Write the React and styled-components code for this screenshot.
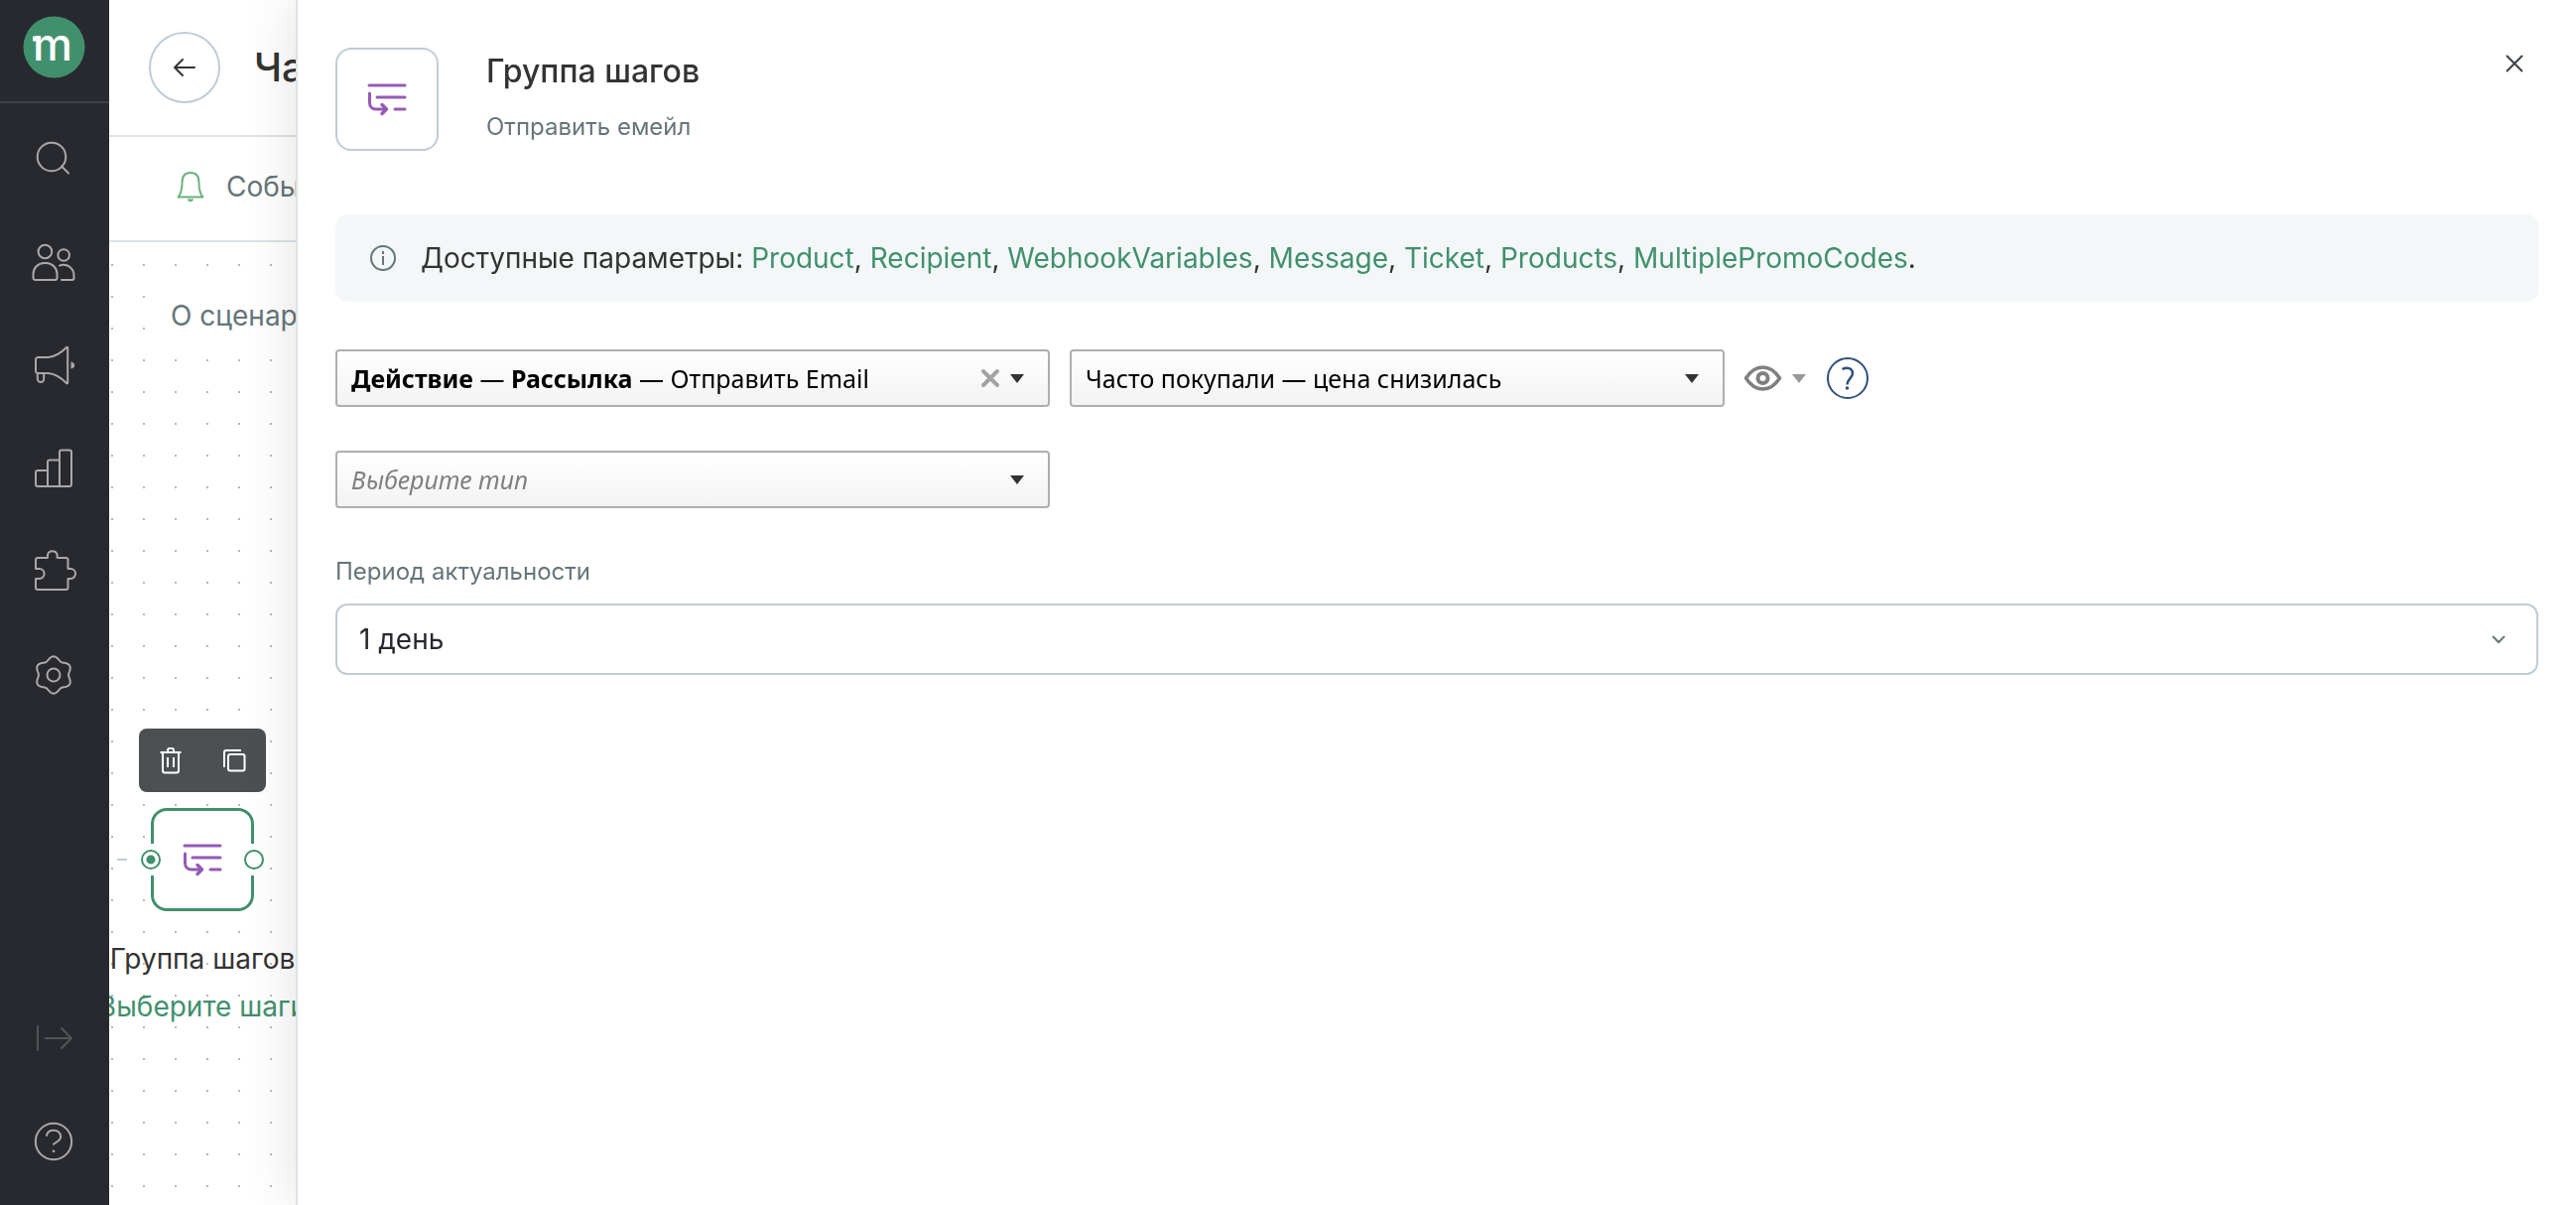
import React, { useState } from "react";
import styled, { createGlobalStyle } from "styled-components";

const color = {
  DARK: "#28292e",
  GREEN: "#41906d",
  PURPLE: "#955ab5",
  TEXT: "#333333",
  GREY_TEXT: "#66757a",
  LINE: "#dce3e6",
  BORDER: "#c0ccd4",
  ICON: "#a9a9ab",
};

const GlobalStyle = createGlobalStyle`
  *, *::before {
    box-sizing: border-box;
  }
  body {
    margin: 0;
    background: #fff;
    color: ${color.TEXT};
    font-family: Inter, "Liberation Sans", sans-serif;
    font-size: 28px;
    line-height: 40px;
  }
  button, select {
    font: inherit;
    color: inherit;
  }
  svg {
    display: block;
    flex: none;
  }
`;

const Page = styled.div`
  display: flex;
  min-height: 100vh;
`;

const Sidebar = styled.aside`
  display: flex;
  flex-direction: column;
  flex: none;
  width: 110px;
  padding-bottom: 12px;
  background: ${color.DARK};
`;

const LogoLink = styled.a`
  display: block;
  height: 104px;
  padding: 16px 23px;
  border-bottom: 2px solid #3f4045;
`;

const Nav = styled.nav`
  display: flex;
  flex-direction: column;
  padding-top: 4px;

  &:last-child {
    margin-top: auto;
  }
`;

const NavButton = styled.button`
  display: flex;
  align-items: center;
  height: 104px;
  padding: 0 31px;
  border: 0;
  background: none;
  color: ${(props) => (props.$muted ? "#535458" : color.ICON)};
  cursor: pointer;
`;

const Main = styled.main`
  display: flex;
  flex: 1;
  flex-direction: column;
  min-width: 0;
  overflow: hidden;
`;

const MainHeader = styled.header`
  display: flex;
  align-items: center;
  gap: 34px;
  height: 138px;
  padding: 0 40px;
  border-bottom: 2px solid ${color.LINE};
`;

const BackButton = styled.button`
  display: flex;
  align-items: center;
  justify-content: center;
  flex: none;
  width: 72px;
  height: 72px;
  padding: 0;
  border: 2px solid ${color.BORDER};
  border-radius: 50%;
  background: #fff;
  cursor: pointer;
`;

const PageTitle = styled.h1`
  margin: 0;
  font-size: 40px;
  font-weight: 500;
  line-height: 48px;
`;

const EventBar = styled.div`
  display: flex;
  align-items: center;
  gap: 20px;
  padding: 30px 66px 34px;
  border-bottom: 2px solid ${color.LINE};
  color: ${color.GREY_TEXT};
`;

const Canvas = styled.section`
  position: relative;
  flex: 1;
  padding: 46px 40px;
  background-image: radial-gradient(circle, #b8b8b8 1px, transparent 1px);
  background-position: -13px 7px;
  background-size: 32px 32px;
`;

const AboutLink = styled.a`
  display: inline-block;
  padding: 8px 22px;
  background: #fff;
  color: ${color.GREY_TEXT};
  text-decoration: none;
`;

const Edge = styled.div`
  position: absolute;
  top: 621px;
  left: 8px;
  width: 10px;
  height: 2px;
  background: ${color.BORDER};
`;

const StepNode = styled.div`
  position: absolute;
  top: 490px;
  left: -66px;
  display: flex;
  flex-direction: column;
  align-items: center;
  width: 320px;
  white-space: nowrap;
`;

const NodeToolbar = styled.div`
  display: flex;
  margin-bottom: 16px;
  border-radius: 8px;
  background: rgba(65, 69, 71, 0.94);
`;

const ToolButton = styled.button`
  display: flex;
  align-items: center;
  justify-content: center;
  width: 64px;
  height: 64px;
  padding: 0;
  border: 0;
  background: none;
  color: #fff;
  cursor: pointer;
`;

const StepBox = styled.div`
  position: relative;
  display: flex;
  align-items: center;
  justify-content: center;
  flex: none;
  width: 104px;
  height: 104px;
  border: ${(props) => (props.$selected ? `3px solid ${color.GREEN}` : `2px solid ${color.BORDER}`)};
  border-radius: 16px;
  background: #fff;
`;

const Port = styled.span`
  position: absolute;
  top: 33px;
  ${(props) => props.$side}: -13px;
  display: flex;
  align-items: center;
  width: 20px;
  height: 32px;
  background: #fff;

  &::before {
    content: "";
    flex: none;
    width: 20px;
    height: 20px;
    border: 2px solid ${color.GREEN};
    border-radius: 50%;
    background: ${(props) => (props.$filled ? `radial-gradient(circle, ${color.GREEN} 4px, #fff 5px)` : "#fff")};
  }
`;

const NodeTitle = styled.div`
  margin-top: 24px;
  line-height: 48px;
`;

const NodeLink = styled.a`
  color: ${color.GREEN};
  line-height: 48px;
  text-decoration: none;
`;

const Drawer = styled.section`
  position: fixed;
  top: 0;
  right: 0;
  bottom: 0;
  left: 298px;
  padding: 48px 38px;
  border-left: 2px solid ${color.LINE};
  background: #fff;
  box-shadow: 0 0 52px rgba(0, 0, 0, 0.12);
  overflow: auto;
`;

const DrawerHeader = styled.header`
  display: flex;
  align-items: flex-start;
  gap: 48px;
  margin-bottom: 64px;
`;

const DrawerHeading = styled.div`
  flex: 1;
  padding-top: 4px;
`;

const DrawerTitle = styled.h2`
  margin: 0 0 20px;
  font-size: 32px;
  font-weight: 500;
  line-height: 40px;
`;

const DrawerSubtitle = styled.p`
  margin: 0;
  color: ${color.GREY_TEXT};
  font-size: 24px;
  line-height: 32px;
`;

const CloseButton = styled.button`
  display: flex;
  align-items: center;
  justify-content: center;
  width: 48px;
  height: 32px;
  padding: 0;
  border: 0;
  background: none;
  cursor: pointer;
`;

const InfoBar = styled.div`
  display: flex;
  align-items: center;
  gap: 24px;
  margin-bottom: 48px;
  padding: 24px 34px;
  border-radius: 12px;
  background: #f3f7f8;
`;

const ParamLink = styled.a`
  color: ${color.GREEN};
  text-decoration: none;
`;

const FieldRow = styled.div`
  display: flex;
  align-items: center;
  gap: 20px;
  margin-bottom: 44px;
`;

const ClassicField = styled.div`
  position: relative;
  display: grid;
  grid-template-columns: 1fr auto;
  align-items: center;
  width: ${(props) => (props.$compact ? "660px" : "720px")};
  height: 58px;
  border: 2px solid #aeaeb3;
  border-radius: 4px;
  background: linear-gradient(#ffffff, #f3f3f3);
  color: #000;
  font-family: "Noto Sans", "Open Sans", sans-serif;
  font-size: 25px;
`;

const ClassicSelect = styled.select`
  grid-row: 1;
  grid-column: 1 / -1;
  width: 100%;
  height: 54px;
  padding: 0 14px;
  border: 0;
  background: none;
  color: ${(props) => (props.$placeholder ? "#808080" : "#000")};
  font-style: ${(props) => (props.$placeholder ? "italic" : "normal")};
  opacity: ${(props) => (props.$covered ? 0 : 1)};
  appearance: none;
`;

const ClassicValue = styled.span`
  grid-row: 1;
  grid-column: 1;
  padding-left: 14px;
  white-space: nowrap;
`;

const ClassicActions = styled.span`
  display: flex;
  grid-row: 1;
  grid-column: 2;
  align-items: center;
  gap: 10px;
  padding-right: 24px;
  pointer-events: none;
`;

const IconButton = styled.button`
  position: relative;
  display: flex;
  align-items: center;
  gap: 10px;
  padding: 0;
  border: 0;
  background: none;
  cursor: pointer;
  pointer-events: auto;
`;

const PeriodLabel = styled.label`
  display: block;
  margin: 48px 0 16px;
  color: ${color.GREY_TEXT};
  font-size: 24px;
  line-height: 32px;
`;

const PeriodField = styled.div`
  display: grid;
  align-items: center;

  svg {
    grid-area: 1 / 1;
    justify-self: end;
    margin-right: 32px;
    pointer-events: none;
  }
`;

const PeriodSelect = styled.select`
  grid-area: 1 / 1;
  width: 100%;
  height: 72px;
  padding: 0 22px;
  border: 2px solid ${color.BORDER};
  border-radius: 12px;
  background: #fff;
  color: ${color.DARK};
  appearance: none;
`;

// six lobes around the centre of a 48px box
const gearPath = () => {
  const points = [];
  for (let i = 0; i < 120; i++) {
    const a = (i / 120) * Math.PI * 2;
    const r = 16.9 + 1.8 * Math.cos(6 * a);
    points.push(`${(23 + r * Math.sin(a)).toFixed(2)} ${(24 - r * Math.cos(a)).toFixed(2)}`);
  }
  return `M${points.join("L")}Z`;
};

const NAV_ICONS = {
  search: (
    <>
      <circle cx="21" cy="22" r="14.3" />
      <path d="M31 31.5l7 7" />
    </>
  ),
  people: (
    <>
      <circle cx="14.4" cy="13.5" r="6.8" />
      <path d="M4.7 42h19.8a2 2 0 0 0 2-2v-4a11 11 0 0 0-11-11h-2a11 11 0 0 0-11 11v4a2 2 0 0 0 2.2 2z" />
      <circle cx="33.2" cy="17" r="5.8" />
      <path d="M29 27.6c1.2-.6 2.5-.8 4-.8a10.5 10.5 0 0 1 10.5 10.5v3a1.7 1.7 0 0 1-1.7 1.7H31" />
    </>
  ),
  megaphone: (
    <>
      <path d="M7.2 16h10.3C24.5 15.5 31 11 36 6c.6-.6 1.2-.3 1.2.5v35c0 .8-.6 1.1-1.2.5-5-5-11.5-9.5-18.5-10H7.2A2.2 2.2 0 0 1 5 29.800V18.2A2.2 2.2 0 0 1 7.2 16z" />
      <path d="M6.8 32v5.8a3.2 3.2 0 0 0 6.4 0V32" />
      <path d="M40.5 20.5v7c5-1 5-6 0-7z" fill="currentColor" stroke="none" />
    </>
  ),
  chart: (
    <>
      <path d="M17 42V17.5a2 2 0 0 1 2-2h10" />
      <path d="M17 26H7a2 2 0 0 0-2 2v12a2 2 0 0 0 2 2h32a2 2 0 0 0 2-2V7.5a2 2 0 0 0-2-2h-8a2 2 0 0 0-2 2V42" />
    </>
  ),
  puzzle: (
    <path d="M7 10h9.5c.5 0 .7-.3.5-.8V6.8a5 5 0 0 1 9.6 0v2.4c-.2.5 0 .8.5.8h8.4a2 2 0 0 1 2 2v9h2.6a5 5 0 0 1 0 10h-2.6v9a2 2 0 0 1-2 2H7a2 2 0 0 1-2-2v-9h3.6a5 5 0 0 0 0-10H5v-9a2 2 0 0 1 2-2z" />
  ),
  gear: (
    <>
      <circle cx="23" cy="24" r="6.5" />
      <path d={gearPath()} />
    </>
  ),
  expand: <path d="M7 12v24M15 24h26M31 14l10 10-10 10" />,
  help: (
    <>
      <circle cx="23" cy="24" r="18.2" />
      <path d="M16 18c.7-3.2 3.5-5.2 7-5.2 4 0 7.2 2.5 7.2 6.2 0 4.2-4.4 5.2-7.2 7.8" />
      <circle cx="23" cy="33.8" r="1.4" fill="currentColor" stroke="none" />
    </>
  ),
};

function NavItem({ type, label, muted }) {
  return (
    <NavButton type="button" aria-label={label} $muted={muted}>
      <svg width="48" height="48" viewBox="0 0 48 48" fill="none" stroke="currentColor" strokeWidth="2" strokeLinecap="round" strokeLinejoin="round">
        {NAV_ICONS[type]}
      </svg>
    </NavButton>
  );
}

function StepsIcon() {
  return (
    <svg width="40" height="34" viewBox="0 0 40 34" fill="none" stroke={color.PURPLE} strokeWidth="3" strokeLinecap="round" strokeLinejoin="round">
      <path d="M2 3h36M10 15h28M28 27h10M2.5 11v9.5c0 4 2.5 6.5 6.5 6.5h10" />
      <path d="M15 22.5l4.5 4.5-4.5 4.5" strokeWidth="3.5" />
    </svg>
  );
}

function Caret({ fill = "#333" }) {
  return (
    <svg width="14" height="9" viewBox="0 0 14 9">
      <path d="M0 0h14L7 9z" fill={fill} />
    </svg>
  );
}

const PARAMS = ["Product", "Recipient", "WebhookVariables", "Message", "Ticket", "Products", "MultiplePromoCodes"];

export default function App() {
  const [period, setPeriod] = useState("1 день");

  return (
    <Page>
      <GlobalStyle />
      <Sidebar>
        <LogoLink href="#" aria-label="m">
          <svg width="63" height="63" viewBox="0 0 63 63">
            <circle cx="31.5" cy="31.5" r="31" fill={color.GREEN} />
            <rect x="10" y="20.5" width="6" height="5" fill="#fff" />
            <text x="10" y="44.5" fill="#fff" fontFamily="Inter, sans-serif" fontSize="45" fontWeight="500">
              m
            </text>
          </svg>
        </LogoLink>
        <Nav>
          <NavItem type="search" label="Поиск" />
          <NavItem type="people" label="Клиенты" />
          <NavItem type="megaphone" label="Кампании" />
          <NavItem type="chart" label="Отчёты" />
          <NavItem type="puzzle" label="Интеграции" />
          <NavItem type="gear" label="Настройки" />
        </Nav>
        <Nav>
          <NavItem type="expand" label="Развернуть" muted />
          <NavItem type="help" label="Помощь" />
        </Nav>
      </Sidebar>

      <Main>
        <MainHeader>
          <BackButton type="button" aria-label="Назад">
            <svg width="24" height="20" viewBox="0 0 24 20" fill="none" stroke={color.TEXT} strokeWidth="2" strokeLinecap="round" strokeLinejoin="round">
              <path d="M22 10H2M10 2L2 10l8 8" />
            </svg>
          </BackButton>
          <PageTitle>Часто</PageTitle>
        </MainHeader>
        <EventBar>
          <svg width="32" height="32" viewBox="0 0 32 32" fill="none" stroke="#6ab27e" strokeWidth="2" strokeLinecap="round" strokeLinejoin="round">
            <path d="M3.5 26.5c2.500-2.500 4-6 4-14.500C7.500 5.500 10.500 2 16 2s8.500 3.500 8.500 10c0 8.500 1.500 12 4 14.500z" />
            <path d="M13 28.5h6c0 3.600-6 3.600-6 0z" fill="#6ab27e" stroke="none" />
          </svg>
          Событие
        </EventBar>
        <Canvas>
          <AboutLink href="#about">О сценарии</AboutLink>
          <Edge />
          <StepNode>
            <NodeToolbar>
              <ToolButton type="button" aria-label="Удалить">
                <svg width="24" height="28" viewBox="0 0 24 28" fill="none" stroke="currentColor" strokeWidth="2" strokeLinejoin="round">
                  <path d="M1.5 6h21M4 6v18.500a2 2 0 0 0 2 2h12a2 2 0 0 0 2-2V6M9 6V4a2 2 0 0 1 2-2h2a2 2 0 0 1 2 2v2M9 11v10M15 11v10" />
                </svg>
              </ToolButton>
              <ToolButton type="button" aria-label="Копировать">
                <svg width="24" height="24" viewBox="0 0 24 24" fill="none" stroke="currentColor" strokeWidth="2" strokeLinejoin="round">
                  <rect x="6" y="6" width="16.5" height="16.5" rx="2" />
                  <path d="M2 19V4a2 2 0 0 1 2-2h15" />
                </svg>
              </ToolButton>
            </NodeToolbar>
            <StepBox $selected>
              <Port $side="left" $filled />
              <StepsIcon />
              <Port $side="right" />
            </StepBox>
            <NodeTitle>Группа шагов</NodeTitle>
            <NodeLink href="#steps">Выберите шаги</NodeLink>
          </StepNode>
        </Canvas>
      </Main>

      <Drawer>
        <DrawerHeader>
          <StepBox>
            <StepsIcon />
          </StepBox>
          <DrawerHeading>
            <DrawerTitle>Группа шагов</DrawerTitle>
            <DrawerSubtitle>Отправить емейл</DrawerSubtitle>
          </DrawerHeading>
          <CloseButton type="button" aria-label="Закрыть">
            <svg width="20" height="20" viewBox="0 0 20 20" fill="none" stroke="#3d4245" strokeWidth="2">
              <path d="M2 2l16 16M18 2L2 18" />
            </svg>
          </CloseButton>
        </DrawerHeader>

        <InfoBar>
          <svg width="28" height="28" viewBox="0 0 28 28" fill="none" stroke={color.GREY_TEXT} strokeWidth="2">
            <circle cx="14" cy="14" r="12" />
            <path d="M14 12v9M14 7v3" />
          </svg>
          <span>
            Доступные параметры:{" "}
            {PARAMS.map((param, i) => (
              <React.Fragment key={param}>
                <ParamLink href={`#${param}`}>{param}</ParamLink>
                {i < PARAMS.length - 1 ? ", " : "."}
              </React.Fragment>
            ))}
          </span>
        </InfoBar>

        <FieldRow>
          <ClassicField>
            <ClassicValue aria-hidden="true">
              <b>Действие</b> — <b>Рассылка</b> — Отправить Email
            </ClassicValue>
            <ClassicSelect aria-label="Действие" $covered>
              <option>Действие — Рассылка — Отправить Email</option>
            </ClassicSelect>
            <ClassicActions>
              <IconButton type="button" aria-label="Очистить">
                <svg width="20" height="20" viewBox="0 0 20 20" stroke="#a3a3a3" strokeWidth="4" strokeLinecap="round">
                  <path d="M3 3l14 14M17 3L3 17" />
                </svg>
              </IconButton>
              <Caret />
            </ClassicActions>
          </ClassicField>
          <ClassicField $compact>
            <ClassicSelect aria-label="Рассылка">
              <option>Часто покупали — цена снизилась</option>
            </ClassicSelect>
            <ClassicActions>
              <Caret />
            </ClassicActions>
          </ClassicField>
          <IconButton type="button" aria-label="Просмотр">
            <svg width="38" height="28" viewBox="0 0 38 28" fill="none" stroke="#808080">
              <path d="M1.5 14C6 7 11.5 3 18.5 3s12.500 4 17 11c-4.500 7-10 11-17 11S6 21 1.5 14z" strokeWidth="3.5" strokeLinejoin="round" />
              <circle cx="18.5" cy="14" r="5" strokeWidth="4" />
            </svg>
            <Caret fill="#999" />
          </IconButton>
          <IconButton type="button" aria-label="Справка">
            <svg width="44" height="44" viewBox="0 0 44 44" fill="none" stroke="#2d5078" strokeWidth="2">
              <circle cx="22" cy="22" r="20" />
              <path d="M16.5 13c5-2.500 10.500-1 10.500 4 0 5-5.500 6-5.500 11.500" strokeWidth="2.5" />
              <circle cx="21.5" cy="32" r="1.8" fill="#2d5078" stroke="none" />
            </svg>
          </IconButton>
        </FieldRow>

        <ClassicField>
          <ClassicSelect aria-label="Тип" $placeholder>
            <option>Выберите тип</option>
          </ClassicSelect>
          <ClassicActions>
            <Caret />
          </ClassicActions>
        </ClassicField>

        <PeriodLabel htmlFor="period">Период актуальности</PeriodLabel>
        <PeriodField>
          <PeriodSelect id="period" value={period} onChange={(e) => setPeriod(e.target.value)}>
            <option>1 день</option>
          </PeriodSelect>
          <svg width="16" height="10" viewBox="0 0 16 10" fill="none" stroke={color.GREY_TEXT} strokeWidth="2">
            <path d="M2 2l6 6 6-6" />
          </svg>
        </PeriodField>
      </Drawer>
    </Page>
  );
}
